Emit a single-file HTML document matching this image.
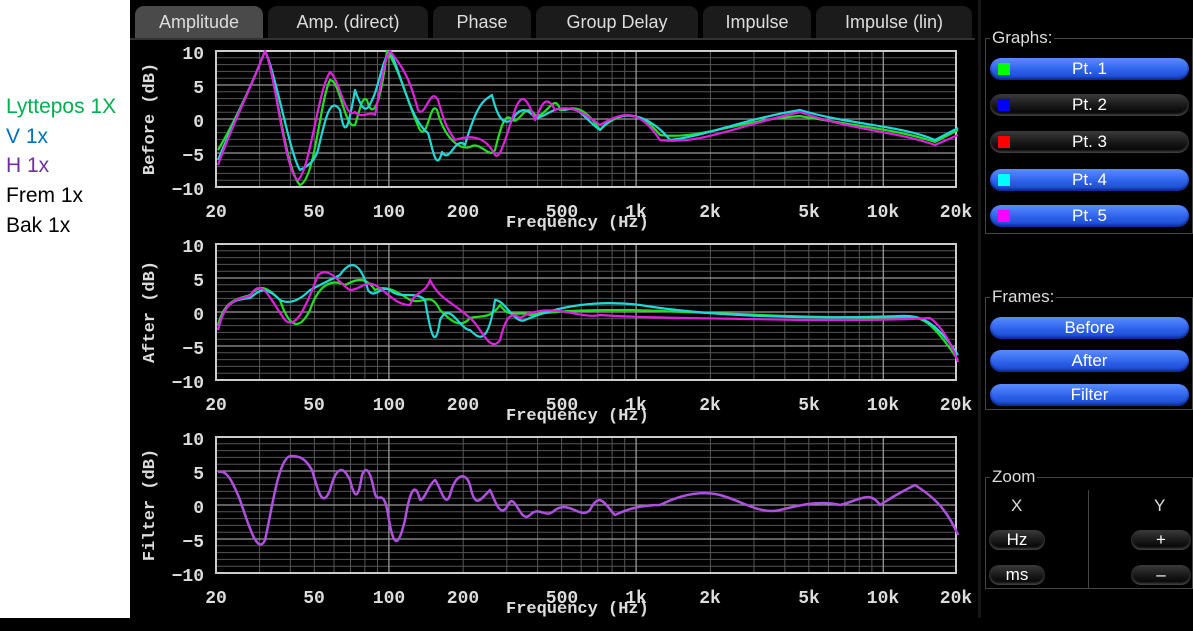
<!DOCTYPE html>
<html><head><meta charset="utf-8"><style>
*{margin:0;padding:0;box-sizing:border-box}
body{width:1193px;height:631px;background:#fff;position:relative;overflow:hidden;font-family:"Liberation Sans",sans-serif}
.lg{position:absolute;left:6px;font-size:21px;line-height:22px}
#app{position:absolute;left:130px;top:0;width:1063px;height:618px;background:#000}
#bot{position:absolute;left:0;top:618px;width:1193px;height:13px;background:#000}
.tab{position:absolute;top:6px;height:32px;background:#1b1b1b;border-radius:9px 9px 0 0;color:#ddd;font-size:18px;text-align:center;line-height:32px}
.grp{position:absolute;border:1px solid #444}
.grp .t{position:absolute;top:-11px;left:4px;background:#000;color:#ddd;font-size:17px;padding:0 2px;line-height:20px}
.btn{position:absolute;height:22px;border-radius:11px;color:#fff;font-size:17px;text-align:center;line-height:22px}
.on{background:linear-gradient(#5a8cff,#2a5ee8 60%,#1b46c8);box-shadow:inset 0 -2px 2px #0b2a90}
.off{background:linear-gradient(#3a3a3a,#141414 60%,#000);box-shadow:inset 0 -2px 2px #444}
.sq{position:absolute;left:8px;top:5px;width:12px;height:12px}
</style></head><body>
<div class="lg" style="top:96px;color:#00b050">Lyttepos 1X</div>
<div class="lg" style="top:126px;color:#0070c0">V 1x</div>
<div class="lg" style="top:155px;color:#7030a0">H 1x</div>
<div class="lg" style="top:185px;color:#000">Frem 1x</div>
<div class="lg" style="top:215px;color:#000">Bak 1x</div>
<div id="app">
<div style="position:absolute;left:0;top:38px;width:845px;height:2px;background:#333"></div>
<div class="tab" style="left:5px;width:128px;background:#4a4a4a">Amplitude</div>
<div class="tab" style="left:138px;width:160px">Amp. (direct)</div>
<div class="tab" style="left:303px;width:98px">Phase</div>
<div class="tab" style="left:406px;width:162px">Group Delay</div>
<div class="tab" style="left:573px;width:108px">Impulse</div>
<div class="tab" style="left:686px;width:156px">Impulse (lin)</div>
<div style="position:absolute;left:848px;top:0;width:3px;height:618px;background:#151515"></div>
</div>
<div id="bot"></div>
<svg style="position:absolute;left:0;top:0" width="980" height="618" font-family="Liberation Mono,monospace" font-weight="bold">
<defs>
<g id="grid">
<g stroke="#555" stroke-width="1">
<path d="M0 6.8H740M0 13.6H740M0 20.4H740M0 27.2H740M0 40.8H740M0 47.6H740M0 54.4H740M0 61.2H740M0 74.8H740M0 81.6H740M0 88.4H740M0 95.2H740M0 108.8H740M0 115.6H740M0 122.4H740M0 129.2H740"/>
<path d="M43.6 0V136M74.4 0V136M98.4 0V136M118 0V136M134.5 0V136M148.9 0V136M161.5 0V136M247.2 0V136M290.8 0V136M321.6 0V136M345.6 0V136M365.2 0V136M381.7 0V136M396.1 0V136M408.7 0V136M494.4 0V136M538 0V136M568.8 0V136M592.8 0V136M612.4 0V136M628.9 0V136M643.3 0V136M655.9 0V136"/>
</g>
<g stroke="#999" stroke-width="1.3">
<path d="M0 34H740M0 68H740M0 102H740M172.9 0V136M420.1 0V136M667.3 0V136"/>
</g>
<rect x="0" y="0" width="740" height="136" fill="none" stroke="#ccc" stroke-width="2"/>
</g>
<g id="ax" fill="#ddd" font-size="18">
<text x="-12" y="8" text-anchor="end">10</text><text x="-12" y="42" text-anchor="end">5</text><text x="-12" y="76" text-anchor="end">0</text><text x="-12" y="110" text-anchor="end">−5</text><text x="-12" y="144" text-anchor="end">−10</text>
<text x="0" y="166" text-anchor="middle">20</text><text x="98" y="166" text-anchor="middle">50</text><text x="173" y="166" text-anchor="middle">100</text><text x="247" y="166" text-anchor="middle">200</text><text x="346" y="166" text-anchor="middle">500</text><text x="420" y="166" text-anchor="middle">1k</text><text x="494" y="166" text-anchor="middle">2k</text><text x="593" y="166" text-anchor="middle">5k</text><text x="667" y="166" text-anchor="middle">10k</text><text x="740" y="166" text-anchor="middle">20k</text>
<text x="290" y="176" font-size="17">Frequency (Hz)</text>
</g>
</defs>
<g transform="translate(216,51)"><use href="#grid"/><use href="#ax"/><text transform="translate(-62,68) rotate(-90)" text-anchor="middle" fill="#ddd" font-size="17">Before (dB)</text></g>
<g transform="translate(216,244)"><use href="#grid"/><use href="#ax"/><text transform="translate(-62,68) rotate(-90)" text-anchor="middle" fill="#ddd" font-size="17">After (dB)</text></g>
<g transform="translate(216,437)"><use href="#grid"/><use href="#ax"/><text transform="translate(-62,68) rotate(-90)" text-anchor="middle" fill="#ddd" font-size="17">Filter (dB)</text></g>
<g fill="none" stroke-width="2.2" stroke-linejoin="round">
<path stroke="#20e020" d="M218 150C230 130 250 90 265 51C275 70 285 170 300 185C315 180 320 100 330 80C340 80 345 130 355 125C360 110 362 95 367 100C372 120 380 110 387 51C400 70 410 110 420 130C428 140 430 100 437 110C445 140 460 150 470 147C480 140 490 160 495 150C500 130 505 110 512 120C520 125 525 100 535 115C545 120 555 90 560 110C570 110 580 100 600 130C620 110 640 110 660 135C700 140 740 120 800 116C850 125 900 130 935 142L958 130"/>
<path stroke="#20d8d8" d="M218 160C230 130 250 90 265 51C275 70 290 155 300 170C310 165 315 160 318 150C325 120 330 95 340 110C345 140 348 130 355 90C362 110 366 115 372 100C378 90 382 60 390 51C400 70 410 120 428 133C432 145 436 175 442 152C450 165 455 135 465 145C478 100 485 100 492 95C498 120 504 125 512 120C518 110 525 105 535 118C545 118 555 105 565 110C580 105 585 120 600 130C620 105 650 115 670 140C710 135 740 120 800 110C850 125 900 125 935 140L958 128"/>
<path stroke="#e020e0" d="M218 165C230 130 250 90 265 51C275 70 285 175 298 180C310 170 318 90 330 72C340 80 345 120 355 112C362 120 370 110 375 115C380 90 385 55 390 51C405 70 410 80 418 110C425 120 430 85 438 100C445 125 448 130 455 140C470 135 485 135 495 155C500 160 505 140 515 110C522 90 528 100 535 120C540 110 545 90 555 110C570 105 580 110 600 125C625 110 640 110 660 140C700 145 740 125 800 112C850 130 900 132 935 145L958 135"/>
<path stroke="#20e020" d="M218 325C225 300 235 300 250 295C260 285 265 285 280 300C290 330 300 330 310 310C320 280 335 280 345 285C355 280 365 275 375 290C385 285 395 290 410 300C425 305 430 290 440 310C450 320 460 330 470 318C480 315 490 320 500 305C510 320 520 310 530 315C560 310 600 310 630 310C700 312 800 318 900 318C920 315 930 318 958 360"/>
<path stroke="#20d8d8" d="M218 330C225 300 235 300 250 298C260 290 265 285 280 300C290 305 300 300 310 290C320 285 330 280 340 275C350 260 360 260 368 290C375 300 380 285 390 290C400 300 415 290 425 300C430 330 435 355 440 320C450 300 460 330 470 330C480 340 488 345 495 300C505 300 515 325 525 320C560 305 600 300 640 305C700 315 800 320 900 316C920 315 935 320 958 355"/>
<path stroke="#e020e0" d="M218 330C225 300 235 300 250 296C262 275 270 300 285 320C295 330 305 310 318 275C330 265 340 285 350 290C360 290 365 280 375 285C385 290 395 305 410 305C415 290 425 295 430 280C440 300 450 300 470 318C480 325 490 355 500 340C505 320 510 310 520 318C550 300 580 320 600 315C640 318 700 318 800 320C860 320 900 320 930 318C940 325 950 340 958 362"/>
<path stroke="#b050e0" stroke-width="2.5" d="M218 472C225 470 230 475 240 500C250 530 258 555 265 540C272 510 278 460 290 456C300 456 305 458 312 470C318 490 322 510 330 490C338 460 345 470 350 480C355 500 358 500 362 475C366 465 370 470 374 490C378 510 383 480 389 520C395 555 400 540 405 520C410 490 415 480 420 500C425 500 428 485 435 480C440 485 445 510 450 495C455 475 465 470 470 485C475 510 480 500 490 490C495 500 500 520 508 505C515 490 520 525 530 515C540 505 545 520 555 510C570 500 580 520 590 510C600 490 605 505 615 515C625 510 640 505 660 505C680 495 700 490 720 495C740 500 760 515 780 510C800 505 820 500 840 505C860 500 870 490 880 505C895 495 905 490 915 485C930 495 945 505 958 535"/>
</g>
</svg>
<div class="grp" style="left:985px;top:38px;width:208px;height:196px"><span class="t">Graphs:</span></div>
<div class="btn on" style="left:990px;top:58px;width:199px"><span class="sq" style="background:#0f0"></span>Pt. 1</div>
<div class="btn off" style="left:990px;top:94px;width:199px"><span class="sq" style="background:#00f"></span>Pt. 2</div>
<div class="btn off" style="left:990px;top:131px;width:199px"><span class="sq" style="background:#f00"></span>Pt. 3</div>
<div class="btn on" style="left:990px;top:169px;width:199px"><span class="sq" style="background:#0ff"></span>Pt. 4</div>
<div class="btn on" style="left:990px;top:205px;width:199px"><span class="sq" style="background:#f0f"></span>Pt. 5</div>
<div class="grp" style="left:985px;top:297px;width:208px;height:113px"><span class="t">Frames:</span></div>
<div class="btn on" style="left:990px;top:317px;width:199px">Before</div>
<div class="btn on" style="left:990px;top:350px;width:199px">After</div>
<div class="btn on" style="left:990px;top:384px;width:199px">Filter</div>
<div class="grp" style="left:985px;top:477px;width:208px;height:112px"><span class="t">Zoom</span></div>
<div style="position:absolute;left:1088px;top:490px;width:1px;height:99px;background:#444"></div>
<div style="position:absolute;left:1011px;top:496px;color:#ddd;font-size:17px">X</div>
<div style="position:absolute;left:1154px;top:496px;color:#ddd;font-size:17px">Y</div>
<div class="btn off" style="left:989px;top:530px;width:56px;height:20px;line-height:20px">Hz</div>
<div class="btn off" style="left:989px;top:565px;width:56px;height:20px;line-height:20px">ms</div>
<div class="btn off" style="left:1131px;top:530px;width:60px;height:20px;line-height:20px">+</div>
<div class="btn off" style="left:1131px;top:565px;width:60px;height:20px;line-height:20px">–</div>
</body></html>
